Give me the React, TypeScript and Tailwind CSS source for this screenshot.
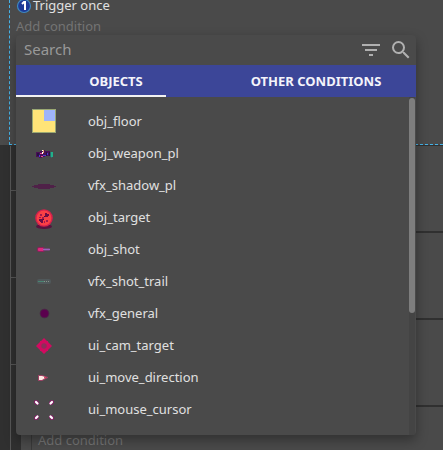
import type { ReactNode } from 'react';

type Item = { name: string; icon: ReactNode };

const items: Item[] = [
  {
    name: 'obj_floor',
    icon: (
      <>
        <rect width="24" height="24" fill="#9aa873" />
        <rect x="1" y="1" width="22" height="22" fill="#ffe478" />
        <rect x="12" y="1" width="11" height="11" fill="#9fb4fa" />
      </>
    ),
  },
  {
    name: 'obj_weapon_pl',
    icon: (
      <g shapeRendering="crispEdges">
        <path d="M4 11h4v-1h2v-1h3v1h5v5h-5v1h-3v1h-3v-1h-3z" fill="#4a1055" />
        <path d="M5 12h2v3h-2zM14 11h1v4h-1zM17 11h1v4h-1z" fill="#271044" />
        <path d="M7 14h1v2h-1zM11 14h3v1h-3zM15 12h1v2h-1z" fill="#4c3bd0" />
        <path d="M8 12h2v1h-2zM9 15h2v1h-2z" fill="#e54b93" />
        <path d="M10 9h1v1h-1zM10 11h1v2h-1z" fill="#fff" />
        <path d="M11 9h1v3h-1z" fill="#e5a16e" />
        <path d="M18 11h3v5h-1v1h-1v-1h-1z" fill="#2b6d6c" />
        <path d="M19 11h2v5h-2z" fill="#22b08a" />
      </g>
    ),
  },
  {
    name: 'vfx_shadow_pl',
    icon: <path d="M0 13h2v-1h4v-1h12v1h4v1h2v1h-2v1h-4v1h-12v-1h-4v-1h-2z" fill="#4f2148" />,
  },
  {
    name: 'obj_target',
    icon: (
      <>
        <ellipse cx="12" cy="21.5" rx="8" ry="2.5" fill="#57133f" />
        <circle cx="12" cy="13" r="8.8" fill="#d5204d" />
        <circle cx="12" cy="13" r="7.4" fill="#fa4045" />
        <path d="M13 8h2v1h2v2h-1v1h-3zM7 14h4v4h-2v-1h-1v-1h-1z" fill="#6d0c46" />
        <path d="M8 9h2v2h-2zM10 12h2v2h-2zM14 15h2v2h-2zM7 12h2v1h-2zM12 16h1v2h-1z" fill="#a2194c" />
        <path d="M12 11h1v1h-1zM11 14h1v1h-1z" fill="#4b0a43" />
      </>
    ),
  },
  {
    name: 'obj_shot',
    icon: (
      <>
        <rect x="5" y="10" width="8" height="5" rx="2" fill="#8d205c" />
        <rect x="6" y="11" width="6" height="3" rx="1" fill="#dd2a7b" />
        <rect x="11" y="11" width="7" height="3" rx="1" fill="#714779" />
        <rect x="11" y="12" width="7" height="1" fill="#9a63bd" />
      </>
    ),
  },
  {
    name: 'vfx_shot_trail',
    icon: (
      <>
        <rect x="5" y="10" width="14" height="5" rx="2" fill="#50585a" />
        <path d="M6 12h6v1h-6z" fill="#4a8472" />
        <path d="M12 12.5h6" stroke="#869489" strokeDasharray="1 1" />
      </>
    ),
  },
  {
    name: 'vfx_general',
    icon: (
      <>
        <circle cx="12.5" cy="12.5" r="4.8" fill="#4c2547" />
        <circle cx="12.5" cy="12.5" r="3.8" fill="#5b004e" />
      </>
    ),
  },
  {
    name: 'ui_cam_target',
    icon: (
      <>
        <path d="M12 5l3 3h1v1l4 4-4 4v1h-1l-3 3-3-3h-1v-1l-4-4 4-4v-1h1z" fill="#d20a60" />
        <circle cx="12" cy="13" r="2.7" fill="#8f2c5a" />
      </>
    ),
  },
  {
    name: 'ui_move_direction',
    icon: (
      <>
        <path d="M6 10h4l6 2v1l-6 3h-4z" fill="#9b4365" />
        <path d="M7 11h3l3 1v1l-3 2h-3z" fill="#ffe7e2" />
        <path d="M11 12h3v1h-3z" fill="#e3425f" />
        <path d="M11 12h1v1h-1z" fill="#fff" />
      </>
    ),
  },
  {
    name: 'ui_mouse_cursor',
    icon: (
      <>
        <g stroke="#861c67" strokeWidth="4" strokeLinecap="round">
          <path d="M4 5l1 1M20 5l-1 1M4 21l1-1M20 21l-1-1" />
        </g>
        <g stroke="#fff" strokeWidth="2.2" strokeLinecap="round">
          <path d="M4 5l1.5 1.5M20 5l-1.5 1.5M4 21l1.5-1.5M20 21l-1.5-1.5" />
        </g>
      </>
    ),
  },
];

function EventSheet() {
  return (
    <div className="flex h-screen flex-col overflow-hidden">
      <section className="flex h-[146px] shrink-0 border-b border-[#303030] bg-[#4a4a4a] pl-[9px]">
        <div className="flex-1 border-b border-l border-dashed border-[#45b4ea] pl-[6px]">
          <div className="flex h-3 items-center gap-px text-[#e0e0e0]">
            <svg className="size-4" viewBox="0 0 16 16" aria-hidden="true">
              <circle cx="8" cy="8" r="6.5" fill="#1d3a96" stroke="#3f88bd" strokeWidth="1.2" />
              <path d="M6 6l2-2h1v8" stroke="#fff" strokeWidth="2" fill="none" />
            </svg>
            <span className="pb-[2px] leading-[10px]">Trigger once</span>
          </div>
          <button type="button" className="block h-7 text-[#747474]">Add condition</button>
        </div>
      </section>
      {[0, 1, 2, 3].map((row) => (
        <section key={row} className="flex h-[87px] shrink-0 bg-[#303030]">
          <div className="w-[10px]" />
          <div className="w-[11px] border-l border-[#575757]">
            <div className="h-[45px] border-b border-[#575757]" />
          </div>
          <div className="flex flex-1 border-b-2 border-[#303030] bg-[#4a4a4a]">
            <div className="w-[11px] border-r border-[#3a3a3a]" />
            {row === 3 && (
              <button type="button" className="h-[66px] self-start px-[6px] text-[#747474]">
                Add condition
              </button>
            )}
          </div>
        </section>
      ))}
    </div>
  );
}

function Picker() {
  return (
    <div className="absolute top-[35px] right-[27px] bottom-[15px] left-4 flex flex-col overflow-hidden rounded bg-[#4a4a4a] shadow-[0_5px_12px_rgba(0,0,0,0.35)]">
      <div className="flex h-[30px] shrink-0 items-center pr-[3px] pl-2">
        <input
          type="text"
          aria-label="Search"
          placeholder="Search"
          className="min-w-0 flex-1 bg-transparent pb-[2px] text-[15px] leading-5 text-[#e0e0e0] outline-none placeholder:text-[#999999]"
        />
        <button type="button" aria-label="Filter" className="mr-[6px]">
          <svg className="size-6" viewBox="0 0 24 24" fill="#b0b0b0">
            <path d="M10 18h4v-2h-4v2zM3 6v2h18V6H3zm3 7h12v-2H6v2z" />
          </svg>
        </button>
        <button type="button" aria-label="Run search">
          <svg className="size-6" viewBox="0 0 24 24" fill="#b0b0b0">
            <path d="M15.5 14h-.79l-.28-.27A6.471 6.471 0 0 0 16 9.5 6.5 6.5 0 1 0 9.5 16c1.61 0 3.09-.59 4.23-1.57l.27.28v.79l5 4.99L20.49 19l-4.99-5zm-6 0C7.01 14 5 11.99 5 9.5S7.01 5 9.5 5 14 7.01 14 9.5 11.99 14 9.5 14z" />
          </svg>
        </button>
      </div>
      <div role="tablist" className="relative grid h-8 shrink-0 grid-cols-2 bg-[#3c4698] font-bold text-[#f4f4fa]">
        <button type="button" role="tab" aria-selected="true">OBJECTS</button>
        <button type="button" role="tab" aria-selected="false">OTHER CONDITIONS</button>
        <div className="absolute bottom-0 left-0 h-[2px] w-3/8 bg-[#f2f2f2]" />
      </div>
      <div className="flex min-h-0 flex-1">
        <ul className="min-w-0 flex-1 overflow-hidden py-2">
          {items.map((item) => (
            <li key={item.name}>
              <button type="button" className="flex h-8 w-full items-center gap-8 px-4 text-[#e0e0e0]">
                <svg className="size-6 shrink-0" viewBox="0 0 24 24" aria-hidden="true">
                  {item.icon}
                </svg>
                <span>{item.name}</span>
              </button>
            </li>
          ))}
        </ul>
        <div className="mr-px w-[6px] bg-[#444444] pt-px">
          <div className="h-[215px] rounded-full bg-[#7e7e7e]" />
        </div>
      </div>
    </div>
  );
}

export default function App() {
  return (
    <main className="relative h-screen overflow-hidden bg-[#4a4a4a] font-['Noto_Sans','Open_Sans',sans-serif] text-[13px] leading-5">
      <EventSheet />
      <Picker />
    </main>
  );
}
